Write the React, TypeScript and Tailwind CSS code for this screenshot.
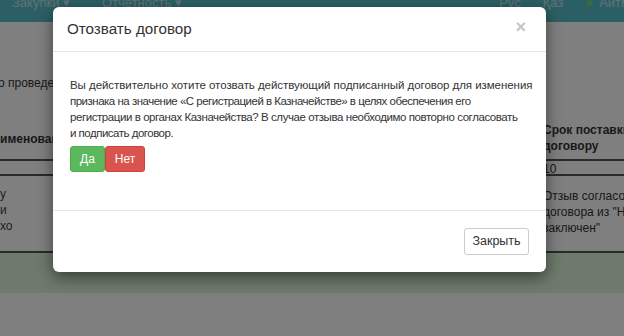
import React from "react";

export default function App() {
  return (
    <div
      className="relative w-[624px] h-[336px] overflow-hidden bg-white"
      style={{ fontFamily: '"Liberation Sans", Arial, sans-serif' }}
    >
      {/* Page underneath */}
      <div className="flex flex-col w-full h-full text-[#333]">
        <div className="h-[22px] bg-[#58bfcb] flex items-start text-[13px] text-[#bfe6ea] shrink-0">
          <div className="flex gap-[32px] pl-[12px] -mt-[7px]">
            <span>Закупки ▾</span>
            <span>Отчетность ▾</span>
          </div>
          <div className="ml-auto flex gap-[22px] -mt-[7px] whitespace-nowrap -mr-[6px]">
            <span>Рус</span>
            <span>Қаз</span>
            <span className="flex items-center gap-[6px]">
              <span className="text-[#7fd37f]">●</span>Аитм
            </span>
          </div>
        </div>
        <div className="h-[52px]" />
        <div className="text-[12px] -ml-[2px] h-[20px] whitespace-nowrap">о проведении</div>
        <div className="h-[24px]" />
        <div className="flex border-b-2 border-[#555] h-[43px] text-[12px] font-bold whitespace-nowrap">
          <div className="w-[543px] shrink-0 pt-[12px]">именование</div>
          <div className="leading-[16px] pt-[4px]">
            Срок поставки
            <br />
            договору
          </div>
        </div>
        <div className="flex border-b-2 border-[#555] h-[15px] text-[12px] leading-[13px] whitespace-nowrap">
          <div className="w-[543px] shrink-0" />
          <div className="pt-[2px]">10</div>
        </div>
        <div className="flex h-[77px] border-b-2 border-[#555] text-[12px] leading-[16px] whitespace-nowrap">
          <div className="w-[543px] shrink-0 pt-[10px] text-[#444]">
            <div>у</div>
            <div>и</div>
            <div>хо</div>
          </div>
          <div className="pt-[12px]">
            Отзыв согласования
            <br />
            договора из "Не
            <br />
            заключен"
          </div>
        </div>
        <div className="h-[40px] bg-[#daf4d8]" />
        <div className="flex-1 bg-white" />
      </div>

      {/* Backdrop */}
      <div className="absolute inset-0 bg-black/50" />

      {/* Modal */}
      <div className="absolute left-[53px] top-[7px] w-[493px] bg-white rounded-[6px] shadow-[0_5px_15px_rgba(0,0,0,0.5)] text-[#333] flex flex-col">
        <div className="h-[45px] flex items-center justify-between px-[14px] border-b border-[#e5e5e5]">
          <span className="text-[15.2px] pt-[1px]">Отозвать договор</span>
          <span className="text-[18px] font-bold text-[#c6c6c6] leading-none mr-[6px] -mt-[4px]">×</span>
        </div>
        <div className="pl-[17px] pr-[10px] pt-[25px] pb-[38px] border-b border-[#e5e5e5]">
          <p className="text-[11.5px] leading-[16px] whitespace-nowrap">
            <span className="block tracking-[-0.05px]">Вы действительно хотите отозвать действующий подписанный договор для изменения</span>
            <span className="block tracking-[-0.5px]">признака на значение «С регистрацией в Казначействе» в целях обеспечения его</span>
            <span className="block tracking-[-0.43px]">регистрации в органах Казначейства? В случае отзыва необходимо повторно согласовать</span>
            <span className="block tracking-[-0.5px]">и подписать договор.</span>
          </p>
          <div className="flex mt-[5px]">
            <button className="w-[35px] h-[26px] bg-[#5cb85c] border border-[#4cae4c] rounded-[3px] text-white text-[12px]">
              Да
            </button>
            <button className="w-[40px] h-[26px] bg-[#d9534f] border border-[#d43f3a] rounded-[3px] text-white text-[12px]">
              Нет
            </button>
          </div>
        </div>
        <div className="h-[61px] flex items-center justify-end pr-[17px]">
          <button className="w-[65px] h-[27px] bg-white border border-[#ccc] rounded-[3px] text-[12.5px] text-[#333]">
            Закрыть
          </button>
        </div>
      </div>
    </div>
  );
}
